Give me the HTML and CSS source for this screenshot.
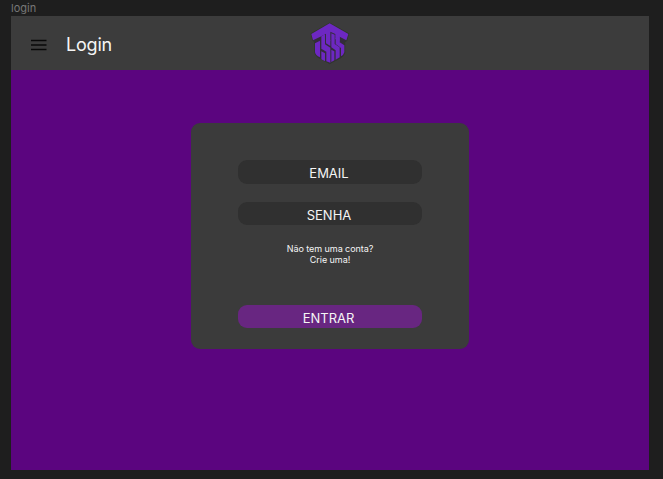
FILE: index.html
```html
<!DOCTYPE html>
<html lang="pt">
<head>
<meta charset="utf-8">
<title>Login</title>
<link rel="stylesheet" href="styles.css">
</head>
<body>
<div class="frame-name">login</div>
<main class="frame">
  <header class="bar">
    <div class="left">
      <svg class="menu" viewBox="0 0 16 12" aria-hidden="true"><path d="M0 1.500h15.500M0 6h15.500M0 10.500h15.500"/></svg>
      <h1>Login</h1>
    </div>
    <svg class="logo" viewBox="0 0 180 168" aria-hidden="true">
      <path class="shield" d="M89 21L146 53L140 75L134 77V110Q132 119 123 125L89 143L54 124Q45 118 44 109V77L39 74L33 53Z"/>
      <path d="M89 22L145 54L139 73L119 62V77L106 69V54L91 47V76L78 69V53L61 62L39 73L34 54Z"/>
      <path d="M45 82L60 74V124Q46 118 45 108Z"/>
      <path d="M64 61L75 55V85L91 95V140L79 136V107L64 98Z"/>
      <path d="M64 106L75 112V136L64 130Z"/>
      <path d="M78 66L91 73V90L78 82Z"/>
      <path d="M94 52L104 56V84L119 94V124L107 131V103L94 94Z"/>
      <path d="M94 101L103 106V133L94 138Z"/>
      <path d="M107 66L119 62V79L133 88V109Q131 117 123 121V96L107 84Z"/>
    </svg>
  </header>
  <form class="card">
    <div class="field">EMAIL</div>
    <div class="field second">SENHA</div>
    <p>Não tem uma conta?<br>Crie uma!</p>
    <button type="button">ENTRAR</button>
  </form>
</main>
</body>
</html>
```
FILE: styles.css
```css
* { box-sizing: border-box; }
body {
  margin: 0;
  height: 479px;
  padding: 0 14px 0 11px;
  overflow: hidden;
  background: #1e1e1e;
  color: #f5f5f5;
  font-family: Inter, sans-serif;
}
.frame-name {
  height: 16px;
  color: #777;
  font-size: 11px;
  line-height: 17px;
}
.frame { height: 453.700px; background: #5b057f; }
.bar {
  display: grid;
  grid-template-columns: 1fr 60px 1fr;
  height: 54.400px;
  background: #3c3c3c;
}
.left { display: flex; align-items: center; padding: 2px 0 0 20px; }
.menu { width: 16px; height: 12px; fill: none; stroke: #080808; stroke-width: 1.700; }
h1 { margin: 0 0 0 19px; font-size: 18px; font-weight: 400; line-height: 22px; letter-spacing: -0.200px; }
.logo { width: 60px; height: 56px; fill: #6d28c2; overflow: visible; }
.logo .shield { fill: #342c3c; stroke: #30382a; stroke-width: 3; }
.card {
  width: 278px;
  height: 226px;
  margin: 52.600px 0 0 180px;
  padding: 37px 47px 0;
  border-radius: 9px;
  background: #3b3b3b;
  text-align: center;
}
.field, button {
  display: block;
  width: 184px;
  height: 24px;
  padding: 3px 2px 0 0;
  border: 0;
  border-radius: 9px;
  background: #303030;
  color: #f5f5f5;
  font: 400 13px/21px Inter, sans-serif;
  text-align: center;
}
.second { height: 23px; margin-top: 18px; }
p { margin: 18px 0 0; font-size: 9px; line-height: 11px; letter-spacing: -0.060px; }
button { height: 23px; padding-right: 3px; margin-top: 40px; background: #682681; }
```
